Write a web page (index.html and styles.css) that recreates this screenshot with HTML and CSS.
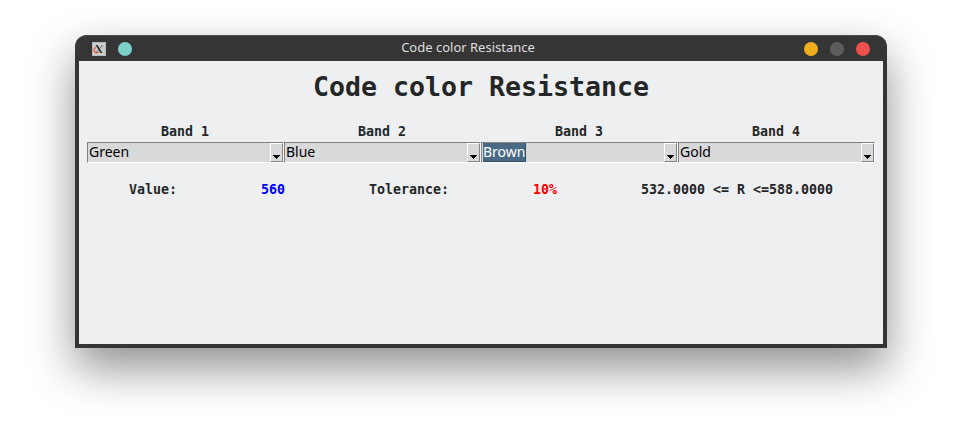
FILE: index.html
```html
<!DOCTYPE html>
<html lang="en">
<head>
<meta charset="utf-8">
<title>Code color Resistance</title>
<link rel="stylesheet" href="styles.css">
</head>
<body>
<main class="window">
  <header class="titlebar">
    <div class="controls left">
      <svg class="app-icon" width="14" height="14" viewBox="0 0 14 14">
        <rect width="14" height="14" fill="#b3b9bd"/>
        <rect x="1" y="1" width="12" height="12" fill="#cccfd0"/>
        <path d="M4 5.5C2 6 1.5 8 2.5 9.5C3.5 11 5 11 6.5 10.5" fill="none" stroke="#e66b38" stroke-width="1.5"/>
        <path d="M9.5 4.5C11.5 4 11.5 5 10.5 6.5M7 11L11.5 10" fill="none" stroke="#dba98b"/>
        <path d="M3.5 3H5.5L10.5 11H8.5Z" fill="#252b2e"/>
        <path d="M10.5 3L4 11" stroke="#454b4e" stroke-width=".8"/>
      </svg>
      <span class="dot teal"></span>
    </div>
    <span class="caption">Code color Resistance</span>
    <div class="controls right">
      <span class="dot amber"></span>
      <span class="dot gray"></span>
      <span class="dot red"></span>
    </div>
  </header>
  <section class="content">
    <h1>Code color Resistance</h1>
    <div class="bands">
      <div class="band">
        <div class="band-label">Band 1</div>
        <div class="combo"><span class="choice">Green</span><span class="drop"><svg width="7" height="4" viewBox="0 0 7 4"><path d="M0 0H7V1H6V2H5V3H4V4H3V3H2V2H1V1H0Z"/></svg></span></div>
      </div>
      <div class="band">
        <div class="band-label">Band 2</div>
        <div class="combo"><span class="choice">Blue</span><span class="drop"><svg width="7" height="4" viewBox="0 0 7 4"><path d="M0 0H7V1H6V2H5V3H4V4H3V3H2V2H1V1H0Z"/></svg></span></div>
      </div>
      <div class="band">
        <div class="band-label">Band 3</div>
        <div class="combo"><span class="choice selected">Brown</span><span class="drop"><svg width="7" height="4" viewBox="0 0 7 4"><path d="M0 0H7V1H6V2H5V3H4V4H3V3H2V2H1V1H0Z"/></svg></span></div>
      </div>
      <div class="band">
        <div class="band-label">Band 4</div>
        <div class="combo"><span class="choice">Gold</span><span class="drop"><svg width="7" height="4" viewBox="0 0 7 4"><path d="M0 0H7V1H6V2H5V3H4V4H3V3H2V2H1V1H0Z"/></svg></span></div>
      </div>
    </div>
    <div class="results">
      <span>Value:</span>
      <span class="value">560</span>
      <span>Tolerance:</span>
      <span class="tolerance">10%</span>
      <span>532.0000 &lt;= R &lt;=588.0000</span>
    </div>
  </section>
</main>
</body>
</html>
```
FILE: styles.css
```css
* { box-sizing: border-box; }

body {
  margin: 0;
  height: 433px;
  padding: 35px 75px 85px;
  background: #fff;
  overflow: hidden;
}

.window {
  width: 812px;
  height: 313px;
  background: #353535;
  border-radius: 12px 12px 0 0;
  padding: 0 4px 4px;
  box-shadow: 0 20px 46px rgba(0, 0, 0, 0.44);
}

.titlebar {
  height: 26px;
  margin: 0 -4px;
  padding: 1px 17px 0;
  border-top: 1px solid #4b4d4c;
  border-radius: 12px 12px 0 0;
  display: grid;
  grid-template-columns: 1fr auto 1fr;
  align-items: center;
}

.caption {
  font: 13px/18px "Noto Sans", sans-serif;
  color: #dfdfdf;
  margin: -4px 27px 0 -27px;
  transform: translateX(14px);
}

.controls { display: flex; align-items: center; gap: 12px; }
.right { justify-content: flex-end; }

.dot { width: 14px; height: 14px; border-radius: 50%; }
.teal { background: #7dd1c8; }
.amber { background: #f0ad1d; }
.gray { background: #5d5d5d; }
.red { background: #ec524b; }

.content {
  height: 283px;
  padding: 9px 8px 8px;
  background: #eeeff1;
  color: #232627;
  font: bold 13.3px/16px "DejaVu Sans Mono", monospace;
}

h1 {
  margin: 0;
  height: 54px;
  font-size: 26.6px;
  line-height: 34px;
  text-align: center;
}

.bands { display: grid; grid-template-columns: repeat(4, 197px); }
.band-label { height: 18px; padding-right: 1px; text-align: center; }

.combo {
  height: 21px;
  display: flex;
  justify-content: space-between;
  padding: 0 0 0 1px;
  background: #d9d9d9;
  border: 1px solid #828282;
  border-right-color: #fff;
  border-bottom-color: #fff;
  font: 14px/18px "Noto Sans", sans-serif;
  color: #000;
}

.combo .choice { height: 19px; }

.combo .selected {
  padding-right: 1px;
  background: #4a6984;
  color: #fff;
  box-shadow: inset -1px -1px #304b64;
}

.drop {
  width: 13px;
  height: 19px;
  padding-top: 11px;
  display: flex;
  justify-content: center;
  align-items: flex-start;
  border: 1px solid #fff;
  border-right-color: #828282;
  border-bottom-color: #828282;
}

.results { display: flex; justify-content: space-around; margin-top: 19px; }
.value { color: #00f; }
.tolerance { color: #f00; }
```
